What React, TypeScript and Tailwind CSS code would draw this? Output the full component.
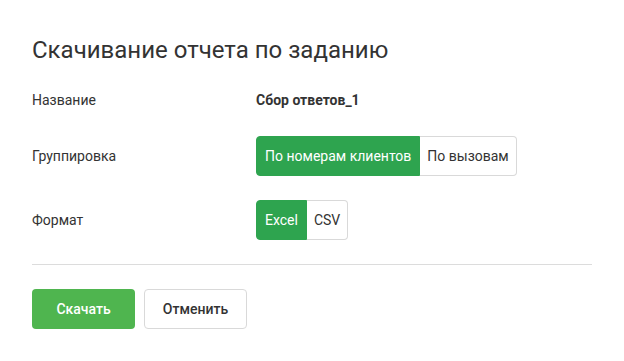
import { useState } from 'react'

export default function App() {
  const [grouping, setGrouping] = useState('clients')
  const [format, setFormat] = useState('excel')

  const seg = (active: boolean) =>
    active
      ? 'bg-[#2ea44f] border-[#2ea44f] text-white'
      : 'bg-white border-[#d9d9d9] text-[#333]'

  return (
    <div className="w-[624px] h-[361px] bg-white px-8 pt-[34px] font-['Roboto','Liberation_Sans',sans-serif] text-[14px] text-[#333]">
      <h1 className="text-[24px] leading-[32px] text-[#333] mb-[19px]">Скачивание отчета по заданию</h1>

      {/* Поля */}
      <div className="flex items-center h-[30px]">
        <div className="w-[224px]">Название</div>
        <div className="font-bold">Сбор ответов_1</div>
      </div>

      <div className="flex items-center mt-[21px]">
        <div className="w-[224px]">Группировка</div>
        <div className="flex">
          <button
            onClick={() => setGrouping('clients')}
            className={`h-10 px-2 border rounded-l ${seg(grouping === 'clients')}`}
          >
            По номерам клиентов
          </button>
          <button
            onClick={() => setGrouping('calls')}
            className={`h-10 px-[7px] border border-l-0 rounded-r ${seg(grouping === 'calls')}`}
          >
            По вызовам
          </button>
        </div>
      </div>

      <div className="flex items-center mt-[24px]">
        <div className="w-[224px]">Формат</div>
        <div className="flex">
          <button
            onClick={() => setFormat('excel')}
            className={`h-10 px-2 border rounded-l ${seg(format === 'excel')}`}
          >
            Excel
          </button>
          <button
            onClick={() => setFormat('csv')}
            className={`h-10 px-[7px] border border-l-0 rounded-r ${seg(format === 'csv')}`}
          >
            CSV
          </button>
        </div>
      </div>

      <div className="border-t border-[#dcdcdc] mt-[24px]" />

      <div className="flex gap-[9px] mt-[24px]">
        <button className="h-10 w-[103px] rounded bg-[#4fb54f] text-white text-[14px] font-medium">Скачать</button>
        <button className="h-10 w-[103px] rounded border border-[#d9d9d9] bg-white text-[#333] text-[14px] font-medium">Отменить</button>
      </div>
    </div>
  )
}
